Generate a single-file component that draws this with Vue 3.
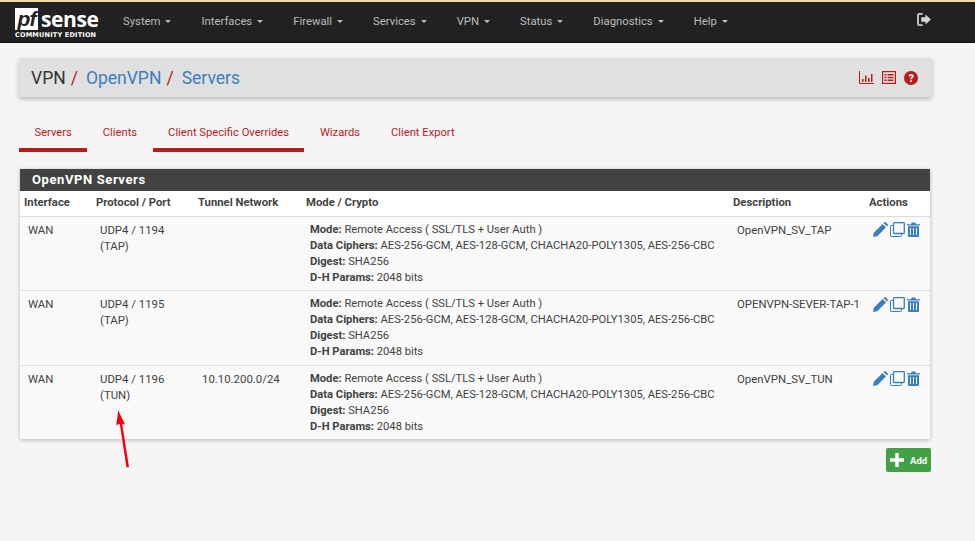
<script setup>
const menus = ['System', 'Interfaces', 'Firewall', 'Services', 'VPN', 'Status', 'Diagnostics', 'Help']

const tabs = [
  { label: 'Servers', active: true },
  { label: 'Clients', active: false },
  { label: 'Client Specific Overrides', active: true },
  { label: 'Wizards', active: false },
  { label: 'Client Export', active: false }
]

const servers = [
  { port: 'UDP4 / 1194', mode: '(TAP)', tunnel: '', descr: 'OpenVPN_SV_TAP' },
  { port: 'UDP4 / 1195', mode: '(TAP)', tunnel: '', descr: 'OPENVPN-SEVER-TAP-1' },
  { port: 'UDP4 / 1196', mode: '(TUN)', tunnel: '10.10.200.0/24', descr: 'OpenVPN_SV_TUN' }
]
</script>

<template>
  <div class="page">
    <nav class="navbar">
      <div class="logo">
        <div class="logo-top">
          <span class="logo-pf">pf</span>
          <span class="logo-sense">sense</span>
        </div>
        <div class="logo-sub">COMMUNITY EDITION</div>
      </div>
      <ul class="menu">
        <li v-for="m in menus" :key="m">{{ m }}<span class="caret"></span></li>
      </ul>
      <svg class="logout" viewBox="0 0 16 14" width="15" height="13">
        <path d="M6 1H2.500A1.500 1.500 0 0 0 1 2.500v9A1.500 1.500 0 0 0 2.500 13H6" fill="none" stroke="#c5cbd0" stroke-width="2" />
        <path d="M4.500 4.500H9V1.500L15 7l-6 5.500v-3H4.500z" fill="#d5d5d5" />
      </svg>
    </nav>

    <header class="crumbs">
      <h1>
        <span>VPN</span><i>/</i>
        <a>OpenVPN</a><i>/</i>
        <a>Servers</a>
      </h1>
      <div class="crumb-icons">
        <svg viewBox="0 0 15 13" width="15" height="13">
          <path d="M.5 0v12.500H15" fill="none" stroke="#b71c1c" />
          <path d="M3 8h1.500v3H3zM6 4.500h1.500V11H6zM9 7h1.500v4H9zM12 3h1.500v8H12z" fill="#b71c1c" />
        </svg>
        <svg viewBox="0 0 14 13" width="14" height="13">
          <rect x=".6" y=".6" width="12.800" height="11.800" fill="none" stroke="#b71c1c" stroke-width="1.200" />
          <path d="M2.500 3h2v1.500h-2zM5.500 3h6v1.500h-6zM2.500 5.800h2v1.500h-2zM5.500 5.800h6v1.500h-6zM2.500 8.600h2v1.500h-2zM5.500 8.600h6v1.500h-6z" fill="#b71c1c" />
        </svg>
        <svg viewBox="0 0 14 14" width="14" height="14">
          <circle cx="7" cy="7" r="7" fill="#b71c1c" />
          <path d="M4.500 5.300C4.700 3.700 5.800 3 7.100 3c1.500 0 2.600.9 2.600 2.200 0 1.700-1.800 1.800-1.800 3H6.200c0-2 1.700-2.100 1.700-3 0-.4-.3-.7-.8-.7-.6 0-.9.400-1 1zM6.200 9.300h1.700V11H6.200z" fill="#fff" />
        </svg>
      </div>
    </header>

    <ul class="tabs">
      <li v-for="t in tabs" :key="t.label" :class="{ active: t.active }">{{ t.label }}</li>
    </ul>

    <section class="panel">
      <h2>OpenVPN Servers</h2>
      <table>
        <colgroup>
          <col style="width: 72px" />
          <col style="width: 102px" />
          <col style="width: 108px" />
          <col style="width: 427px" />
          <col style="width: 136px" />
          <col style="width: 65px" />
        </colgroup>
        <thead>
          <tr>
            <th>Interface</th>
            <th>Protocol / Port</th>
            <th>Tunnel Network</th>
            <th>Mode / Crypto</th>
            <th>Description</th>
            <th>Actions</th>
          </tr>
        </thead>
        <tbody>
          <tr v-for="s in servers" :key="s.port">
            <td>WAN</td>
            <td>{{ s.port }}<br />{{ s.mode }}</td>
            <td>{{ s.tunnel }}</td>
            <td class="crypto">
              <b>Mode:</b> Remote Access ( SSL/TLS + User Auth )<br />
              <b>Data Ciphers:</b> AES-256-GCM, AES-128-GCM, CHACHA20-POLY1305, AES-256-CBC<br />
              <b>Digest:</b> SHA256<br />
              <b>D-H Params:</b> 2048 bits
            </td>
            <td>{{ s.descr }}</td>
            <td>
              <div class="actions">
                <svg viewBox="0 0 15 15" width="15" height="15">
                  <path d="M0 15l.8-4.200L9.600 2l3.400 3.400L4.200 14.200zM10.500 1.100 11.400.2c.4-.3.900-.3 1.200 0l2.200 2.200c.3.300.3.800 0 1.200l-.9.900z" fill="#3b7ebf" />
                </svg>
                <svg viewBox="0 0 15 15" width="15" height="15">
                  <path d="M3.500 3.500H1.200a.7.700 0 0 0-.7.700v9.600c0 .4.300.7.700.7h9.600c.4 0 .7-.3.700-.7v-2.300" fill="none" stroke="#3b7ebf" />
                  <rect x="3.500" y=".7" width="10.800" height="10.800" rx=".8" fill="none" stroke="#3b7ebf" stroke-width="1.300" />
                </svg>
                <svg viewBox="0 0 13 15" width="13" height="15">
                  <path d="M0 2.200h4L4.700.5h3.600L9 2.200h4v1.300H0zM1 4.300h11v9.400c0 .7-.5 1.300-1.200 1.300H2.200C1.500 15 1 14.400 1 13.700z" fill="#3b7ebf" />
                  <path d="M3.500 6v7M6.500 6v7M9.500 6v7" stroke="#f9f9f9" stroke-width="1" />
                </svg>
              </div>
            </td>
          </tr>
        </tbody>
      </table>
    </section>

    <div class="footer-row">
      <button class="add">
        <svg viewBox="0 0 14 14" width="14" height="14">
          <path d="M5.300 0h3.400v5.300H14v3.400H8.700V14H5.300V8.700H0V5.300h5.300z" fill="#fff" />
        </svg>
        Add
      </button>
    </div>

    <svg class="arrow" viewBox="0 0 20 60" width="20" height="60">
      <path d="M6.300.5 13 14.500 10.200 14 17 57 14.500 57.500 7.800 14 4.300 15z" fill="#f5000f" />
    </svg>
  </div>
</template>

<style>
html, body {
  margin: 0;
  background: #f5f5f5;
}
</style>

<style scoped>
.page {
  position: relative;
  height: 541px;
  overflow: hidden;
  background: #f5f5f5;
  font-family: Roboto, "Liberation Sans", sans-serif;
  font-size: 12px;
  line-height: 16px;
  color: #424242;
}

.navbar {
  box-sizing: border-box;
  height: 43px;
  display: flex;
  align-items: center;
  padding-left: 15px;
  background: #212121;
  border-top: 2px solid #f9d9a9;
  border-bottom: 1px solid #111;
}

.logo {
  width: 85px;
  margin-top: 2px;
  color: #fff;
}

.logo-top {
  display: flex;
  align-items: center;
  height: 24px;
}

.logo-pf {
  background: #fff;
  color: #212121;
  font: italic 700 21px/22px "Liberation Sans", sans-serif;
  width: 23px;
  text-align: center;
  letter-spacing: -1px;
}

.logo-sense {
  margin-left: 3px;
  font: 700 21px/22px "Open Sans", sans-serif;
  letter-spacing: -.4px;
}

.logo-sub {
  font: 700 6.500px/9px "DejaVu Sans", sans-serif;
  white-space: nowrap;
  letter-spacing: .2px;
}

.menu {
  display: flex;
  gap: 30px;
  list-style: none;
  margin: 0 0 0 23px;
  padding: 0;
  color: #bdbdbd;
  font-size: 11.300px;
}

.caret {
  display: inline-block;
  margin-left: 5px;
  vertical-align: 2px;
  border-top: 3px solid #bdbdbd;
  border-left: 3px solid transparent;
  border-right: 3px solid transparent;
}

.logout {
  margin-left: auto;
  margin-right: 43px;
  margin-top: -5px;
}

.crumbs {
  display: flex;
  align-items: center;
  justify-content: space-between;
  box-sizing: border-box;
  height: 39px;
  margin: 15px 43px 0 19px;
  padding: 0 14px 0 12px;
  background: #e0e0e0;
  border-radius: 2px;
  box-shadow: 0 2px 5px rgba(0, 0, 0, .26);
}

.crumbs h1 {
  margin: 0;
  font-size: 17.500px;
  font-weight: 400;
  line-height: 24px;
  color: #333;
}

.crumbs i {
  color: #b71c1c;
  font-style: normal;
  margin: 0 8px 0 5px;
}

.crumbs a {
  color: #3b7ebf;
}

.crumb-icons {
  display: flex;
  align-items: center;
  gap: 8px;
}

.tabs {
  display: flex;
  list-style: none;
  margin: 17px 0 0 19px;
  padding: 0;
  color: #b71c1c;
  font-size: 11.200px;
}

.tabs li {
  padding: 11px 15.500px 7px;
  border-bottom: 4px solid transparent;
}

.tabs li.active {
  border-bottom-color: #b71c1c;
}

.panel {
  margin: 17px 45px 0 20px;
  background: #f9f9f9;
  box-shadow: 0 1px 4px rgba(0, 0, 0, .28);
}

.panel h2 {
  margin: 0;
  height: 22px;
  padding-left: 12px;
  background: #424242;
  color: #fff;
  font-size: 13px;
  font-weight: 700;
  line-height: 22px;
  letter-spacing: .6px;
}

table {
  width: 100%;
  table-layout: fixed;
  border-collapse: collapse;
}

th {
  height: 25px;
  box-sizing: border-box;
  padding: 0 4px;
  background: #fff;
  text-align: left;
  font-size: 11.300px;
  font-weight: 700;
  border-bottom: 1px solid #ddd;
}

td {
  padding: 5px 8px 4.500px;
  vertical-align: top;
  border-bottom: 1px solid #ddd;
  white-space: nowrap;
  font-size: 11.400px;
}

td.crypto {
  font-size: 11.200px;
}

tbody tr:last-child td {
  border-bottom: 0;
}

.actions {
  display: flex;
  align-items: center;
  gap: 2px;
  height: 16px;
}

.footer-row {
  display: flex;
  justify-content: flex-end;
  margin: 9px 44px 0 0;
}

.add {
  display: flex;
  align-items: center;
  gap: 6px;
  box-sizing: border-box;
  width: 45px;
  height: 24px;
  padding: 0 0 0 4px;
  border: 0;
  border-radius: 2px;
  background: #43a047;
  color: #fff;
  font-family: Roboto, sans-serif;
  font-size: 9.500px;
  font-weight: 700;
}

.arrow {
  position: absolute;
  left: 112px;
  top: 410px;
}
</style>
